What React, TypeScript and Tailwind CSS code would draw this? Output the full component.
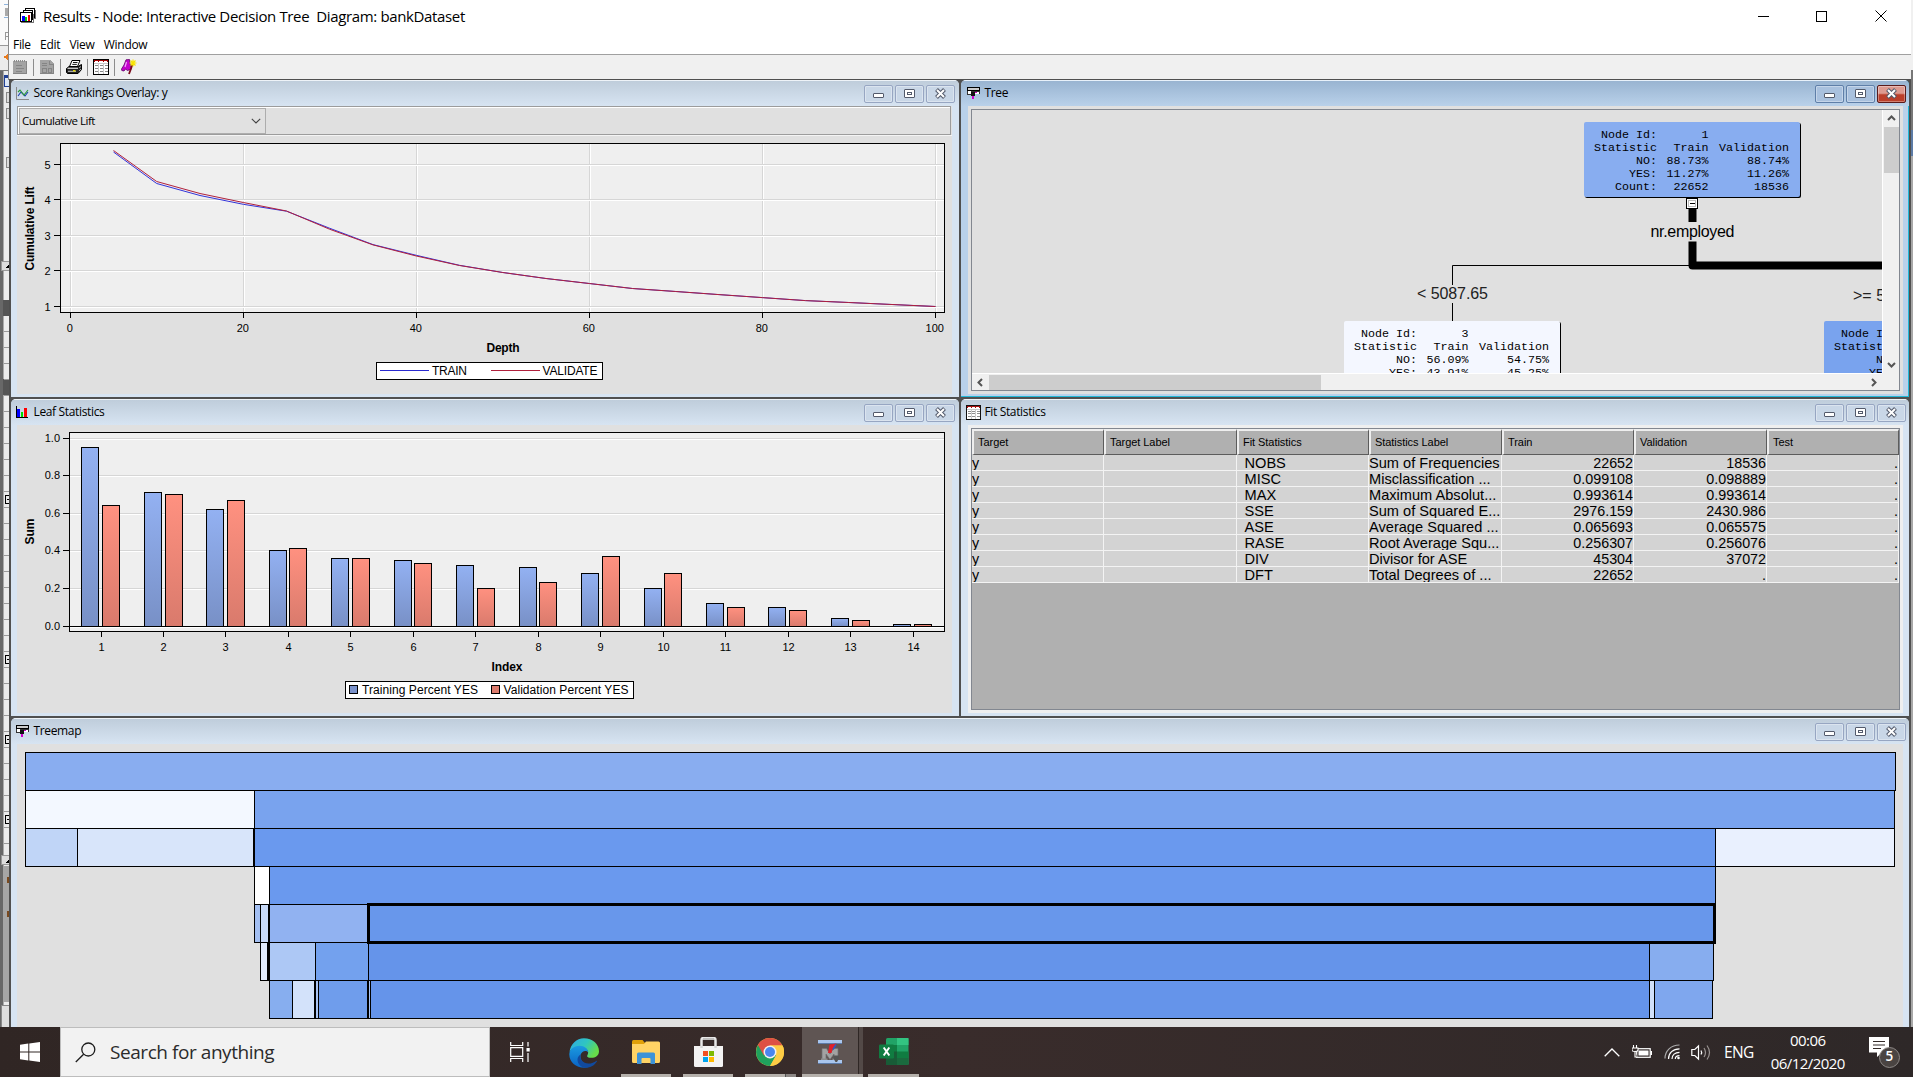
import React from 'react';

const UI = 'font-["Open_Sans","Noto_Sans",sans-serif]';
const ARIAL = 'font-["Liberation_Sans",Arial,sans-serif]';

/* ---------- small icons ---------- */

function AppIcon() {
  return (
    <svg width="16" height="16" viewBox="0 0 16 16" shapeRendering="crispEdges">
      <rect x="5.5" y=".5" width="9" height="9" fill="#fff" stroke="#000" />
      <path d="M7 2.500h6" stroke="#000" strokeDasharray="2 1" />
      <rect x="3.500" y="2.500" width="9" height="9" fill="#fff" stroke="#000" />
      <path d="M15.500 2v8.500h-3" fill="none" stroke="#777" />
      <rect x=".5" y="4.500" width="11" height="9" fill="#fff" stroke="#000" />
      <rect x="2" y="8" width="3" height="5" fill="#00f" />
      <rect x="5" y="9" width="2" height="4" fill="#0c0" />
      <rect x="8" y="7" width="2" height="6" fill="#e00" />
      <path d="M1 14.500h12.500V6" stroke="#777" fill="none" />
    </svg>
  );
}

function NotepadIcon() {
  return (
    <svg width="14" height="16" viewBox="0 0 14 16" shapeRendering="crispEdges">
      <rect x="0" y="2" width="14" height="13" fill="#a3a3a3" />
      <path d="M1 1.500h12" stroke="#8c8c8c" strokeDasharray="1 1" strokeWidth="2" />
      <path d="M3 6.500h6M3 9.500h8M3 12.500h6M0 14.500h14M13.500 2v13" stroke="#858585" />
    </svg>
  );
}

function ReportIcon() {
  return (
    <svg width="14" height="16" viewBox="0 0 14 16" shapeRendering="crispEdges">
      <path d="M0 1h10l4 4v10H0z" fill="#a3a3a3" />
      <path d="M2 4.500h5M2 6.500h5M9.500 2v3h3M2.500 9.500h4v4h-4zM8.500 9.500h3v4h-3z" stroke="#858585" fill="none" />
      <path d="M0 14.500h14M13.500 5v10" stroke="#858585" />
    </svg>
  );
}

function PrinterIcon() {
  return (
    <svg width="16" height="16" viewBox="0 0 16 16">
      <path d="M6 1.500h8l-2.500 6h-8z" fill="#fff" stroke="#000" />
      <path d="M7 3.500h4.500M6.300 5.400h4.500" stroke="#000" strokeWidth=".9" />
      <path d="M3 7.500h9l3.500-2v5l-3.500 4H1.500l-1-1v-4z" fill="#222" stroke="#000" />
      <path d="M1.500 9.300h10.500" stroke="#ddd" strokeWidth="1.200" />
      <path d="M2 12.300h8" stroke="#ccc" />
      <path d="M7 11.800h2.500" stroke="#e8d800" strokeWidth="1.400" />
      <path d="M13 9l2-1.500M13 12l2-2" stroke="#aaa" />
    </svg>
  );
}

function TableIcon({ size = 16 }: { size?: number }) {
  return (
    <svg width={size} height={size} viewBox="0 0 16 16" shapeRendering="crispEdges" className="shrink-0">
      <rect x=".5" y=".5" width="15" height="15" fill="#fff" stroke="#000" />
      <path d="M1 1.500h14" stroke="#a00000" />
      <path d="M1 2.500h1M5 2.500h1M10 2.500h1M14 2.500h1" stroke="#a00000" />
      <path d="M5.500 4v11M10.500 4v11M1 4.500h14" stroke="#c8c8c8" />
      <path d="M2 6.500h3M6.500 6.500h3M11.500 6.500h3M2 9.500h3M6.500 9.500h3M11.500 9.500h3M2 12.500h3M6.500 12.500h3M11.500 12.500h3" stroke="#888" />
    </svg>
  );
}

function WandIcon() {
  return (
    <svg width="16" height="16" viewBox="0 0 16 16">
      <path d="M5 .8l3.500-.3.500 4 1.500 5.500-4 1.500-2-1.500-1.500 2L.8 11.500.5 10 3 6z" fill="#c400cc" stroke="#600068" strokeWidth=".8" />
      <path d="M5.500 3L4 8" stroke="#f6a0ff" strokeWidth="1.200" />
      <path d="M11.500 5.500L8 15" stroke="#7a0a1a" strokeWidth="1.800" />
      <path d="M12 .5v7M8.500 4h7M9.500 1.500l5 5M14.500 1.500l-5 5" stroke="#f8e400" strokeWidth="1.200" />
    </svg>
  );
}

function LineChartIcon() {
  return (
    <svg width="14" height="14" viewBox="0 0 14 14">
      <path d="M.5 0v12.500H13" fill="none" stroke="#888" />
      <path d="M2 9l3-4 4 4 3-4" fill="none" stroke="#1c3fae" strokeWidth="1.100" />
      <path d="M2 5l2-2 4 5 4-5" fill="none" stroke="#2a9a3a" strokeWidth="1.100" />
    </svg>
  );
}

function BarChartIcon() {
  return (
    <svg width="14" height="13" viewBox="0 0 14 13" shapeRendering="crispEdges">
      <path d="M.5 0v11.500H12" fill="none" stroke="#000" />
      <rect x="1" y="3" width="3" height="8" fill="#00f" />
      <rect x="5" y="6" width="2" height="5" fill="#0d0" />
      <rect x="8" y="2" width="3" height="9" fill="#f00" />
    </svg>
  );
}

function TreeIcon() {
  return (
    <svg width="13" height="13" viewBox="0 0 13 13" shapeRendering="crispEdges">
      <rect x=".5" y=".5" width="12" height="3" fill="#ccc" stroke="#000" />
      <rect x="1" y="4" width="11" height="3" fill="#fff" />
      <path d="M.5 4v3.500H5M4 4.500h9M12.500 4v3" stroke="#333" fill="none" />
      <path d="M5 5.500h6" stroke="#d000d0" strokeDasharray="2 1" />
      <rect x="4" y="5" width="4" height="4" fill="#111" />
      <rect x="5" y="9" width="2" height="3" fill="#d000d0" />
    </svg>
  );
}

/* ---------- inner window chrome ---------- */

function FrameButtons({ active }: { active?: boolean }) {
  const edge = active ? 'border-[#5f7fa8] bg-[#a9c1de]' : 'border-[#97a6c2] bg-[#c9d7e7]';
  return (
    <div className="flex gap-[2px]">
      <div className={`flex h-[18px] w-[29px] items-center justify-center rounded-[2px] border ${edge} pt-[3px] inset-shadow-[0_0_0_1px_#ffffff55]`}>
        <div className="h-[5px] w-[11px] rounded-[1px] border border-[#535a6b] bg-white" />
      </div>
      <div className={`flex h-[18px] w-[29px] items-center justify-center rounded-[2px] border ${edge} inset-shadow-[0_0_0_1px_#ffffff55]`}>
        <div className="flex h-[9px] w-[11px] items-center justify-center rounded-[1px] border border-[#535a6b] bg-white">
          <div className="h-[3px] w-[5px] border border-[#535a6b]" />
        </div>
      </div>
      <div
        className={`flex h-[18px] w-[29px] items-center justify-center rounded-[2px] border ${
          active ? 'border-[#5a1a1a] bg-linear-to-b from-[#dd9a90] from-45% to-[#bb3f2b] to-55%' : edge
        } inset-shadow-[0_0_0_1px_#ffffff55]`}
      >
        <svg width="13" height="11" viewBox="0 0 13 11">
          <path d="M2.500 1.500l8 8M10.500 1.500l-8 8" stroke="#535a6b" strokeWidth="4" />
          <path d="M3 2l7 7M10 2l-7 7" stroke="#fff" strokeWidth="2" />
        </svg>
      </div>
    </div>
  );
}

type PanelProps = {
  icon: React.ReactNode;
  title: string;
  active?: boolean;
  edge: string;
  children: React.ReactNode;
};

function Panel({ icon, title, active, edge, children }: PanelProps) {
  return (
    <section
      className={`flex min-h-0 min-w-0 flex-col overflow-hidden rounded-t-[5px] ${edge} ${
        active ? 'bg-[#b9d1ea] inset-shadow-[-1px_-1px_0_0_#22b8d8]' : 'bg-[#d7e4f2]'
      }`}
    >
      <header
        className={`-mx-[7px] flex h-[26px] shrink-0 items-center border-t pr-[4px] pl-[6px] ${
          active
            ? 'border-[#e8f1fa] bg-linear-to-b from-[#99b4d1] to-[#b9d1ea]'
            : 'border-[#eef3f8] bg-linear-to-b from-[#bfcddb] to-[#d7e4f2]'
        }`}
      >
        <span className="flex w-[17.5px] shrink-0">{icon}</span>
        <h2 className={`grow pb-px text-[12px] leading-[24px] tracking-[-0.35px] text-black ${UI}`}>{title}</h2>
        <FrameButtons active={active} />
      </header>
      <div className="flex min-h-0 grow flex-col bg-[#e0e0e0]">{children}</div>
    </section>
  );
}

/* ---------- Score rankings ---------- */

const liftX = [113.5, 156.7, 200, 243.3, 286.5, 329.8, 373, 416.3, 459.5, 502.8, 546, 589.3, 632.5, 675.8, 719, 762.3, 805.5, 848.8, 892, 935.5];
const trainY = [152, 183.5, 195.5, 204.3, 211.2, 228.3, 244.6, 255.3, 265.3, 272.5, 278.5, 283.5, 288.5, 291.5, 294.6, 297.6, 300.6, 302.5, 304.5, 306.5];
const validY = [150.5, 181.5, 193.5, 202.5, 211, 229.3, 244.9, 256, 265.5, 272.5, 278.5, 283.5, 288.5, 291.5, 294.6, 297.6, 300.6, 302.5, 304.5, 306.5];
const toPoints = (ys: number[]) => ys.map((y, i) => `${liftX[i]},${y}`).join(' ');

function LiftChart() {
  const xs = [70.5, 243.5, 416.5, 589.5, 762.5, 935.5];
  const ys = [306.5, 270.5, 235.5, 199.5, 164.5];
  return (
    <svg className={`block ${ARIAL}`} width="935" height="258" viewBox="17 136 935 258">
      <rect x="60.5" y="143.5" width="884" height="169" fill="#efefef" />
      {xs.map((x) => (
        <g key={x}>
          <path d={`M${x} 144V312`} stroke="#d6d6d6" />
          <path d={`M${x + 1} 144V312`} stroke="#fff" />
        </g>
      ))}
      {ys.map((y) => (
        <g key={y}>
          <path d={`M61 ${y}H944`} stroke="#d6d6d6" />
          <path d={`M61 ${y + 1}H944`} stroke="#fff" />
        </g>
      ))}
      <polyline points={toPoints(trainY)} fill="none" stroke="#3232d8" />
      <polyline points={toPoints(validY)} fill="none" stroke="#b0203c" />
      <rect x="60.5" y="143.5" width="884" height="169" fill="none" stroke="#000" />
      {xs.map((x, i) => (
        <g key={x}>
          <path d={`M${x} 313v5`} stroke="#000" />
          <text x={x - 0.7} y="332" fontSize="11" textAnchor="middle">{i * 20}</text>
        </g>
      ))}
      {ys.map((y, i) => (
        <g key={y}>
          <path d={`M54 ${y}h6`} stroke="#000" />
          <text x="50.500" y={y + 4} fontSize="11" textAnchor="end">{i + 1}</text>
        </g>
      ))}
      <text transform="translate(34 228.500) rotate(-90)" fontSize="12" fontWeight="bold" textAnchor="middle" textLength="84">Cumulative Lift</text>
      <text x="503" y="352" fontSize="12" fontWeight="bold" textAnchor="middle" textLength="33">Depth</text>
      <rect x="376.500" y="362.500" width="226" height="17" fill="#fff" stroke="#000" />
      <path d="M380 370.500h49" stroke="#2a2ad0" />
      <text x="432" y="375" fontSize="12" textLength="35">TRAIN</text>
      <path d="M491 370.500h49" stroke="#b0203c" />
      <text x="542.500" y="375" fontSize="12" textLength="55">VALIDATE</text>
    </svg>
  );
}

function ScoreRankings() {
  return (
    <>
      <div className="mr-px flex h-[29px] border border-[#9c9c9c] bg-[#e0e0e0] inset-shadow-[1px_1px_0_0_#fff]">
        <div className={`mt-px ml-px flex h-[26px] w-[247px] items-center justify-between border border-[#adadad] bg-[#e1e1e1] pr-[4px] pl-[2px] ${UI}`}>
          <span className="text-[11.5px] tracking-[-0.5px]">Cumulative Lift</span>
          <svg width="10" height="6" viewBox="0 0 10 6">
            <path d="M.8.8L5 5 9.200.8" fill="none" stroke="#444" strokeWidth="1.100" />
          </svg>
        </div>
      </div>
      <div className="h-px bg-[#f4f4f4]" />
      <LiftChart />
    </>
  );
}

/* ---------- Leaf statistics ---------- */

const trainBars: [number, number][] = [
  [81, 447], [144, 492], [206, 509], [269, 550], [331, 558], [394, 560], [456, 565],
  [519, 567], [581, 573], [644, 588], [706, 603], [768, 607], [831, 618], [893, 624],
];
const validBars: [number, number][] = [
  [102, 505], [165, 494], [227, 500], [289, 548], [352, 558], [414, 563], [477, 588],
  [539, 582], [602, 556], [664, 573], [727, 607], [789, 610], [852, 620], [914, 624],
];
const leafTicks = [101, 163, 225, 288, 350, 413, 475, 538, 600, 663, 725, 788, 850, 913];

function LeafChart() {
  const ys: [number, string][] = [[438.5, '1.0'], [475.5, '0.8'], [513.5, '0.6'], [550.5, '0.4'], [588.5, '0.2'], [626.5, '0.0']];
  return (
    <svg className={`block ${ARIAL}`} width="935" height="288" viewBox="17 425 935 288">
      <defs>
        <linearGradient id="blueBar" x1="0" y1="0" x2="0" y2="1">
          <stop offset="0" stopColor="#93b1f2" />
          <stop offset="1" stopColor="#7890c6" />
        </linearGradient>
        <linearGradient id="redBar" x1="0" y1="0" x2="0" y2="1">
          <stop offset="0" stopColor="#ff9180" />
          <stop offset="1" stopColor="#d97a6c" />
        </linearGradient>
      </defs>
      <rect x="69.5" y="432.5" width="875" height="199" fill="#efefef" />
      {ys.map(([y, label]) => (
        <g key={label}>
          <path d={`M70 ${y}H944`} stroke="#d6d6d6" />
          <path d={`M70 ${y + 1}H944`} stroke="#fff" />
          <path d={`M63 ${y}h6`} stroke="#000" />
          <text x="60" y={y + 3.5} fontSize="11" textAnchor="end">{label}</text>
        </g>
      ))}
      {trainBars.map(([x, y]) => (
        <rect key={x} x={x + 0.5} y={y + 0.5} width="17" height={626 - y} fill="url(#blueBar)" stroke="#000" />
      ))}
      {validBars.map(([x, y]) => (
        <rect key={x} x={x + 0.5} y={y + 0.5} width="17" height={626 - y} fill="url(#redBar)" stroke="#000" />
      ))}
      <path d="M69 626.5H944" stroke="#000" />
      <rect x="69.5" y="432.5" width="875" height="199" fill="none" stroke="#000" />
      {leafTicks.map((x, i) => (
        <g key={x}>
          <path d={`M${x + 0.5} 632v5`} stroke="#000" />
          <text x={x + 0.5} y="651" fontSize="11" textAnchor="middle">{i + 1}</text>
        </g>
      ))}
      <text transform="translate(34 531.500) rotate(-90)" fontSize="12" fontWeight="bold" textAnchor="middle" textLength="26">Sum</text>
      <text x="507" y="671" fontSize="12" fontWeight="bold" textAnchor="middle" textLength="31">Index</text>
      <rect x="345.500" y="681.500" width="288" height="17" fill="#fff" stroke="#000" />
      <rect x="349.500" y="685.500" width="8" height="8" fill="#7a92cb" stroke="#000" />
      <text x="362" y="694" fontSize="12" textLength="116">Training Percent YES</text>
      <rect x="491.500" y="685.500" width="8" height="8" fill="#dc7b6d" stroke="#000" />
      <text x="503.500" y="694" fontSize="12" textLength="125">Validation Percent YES</text>
    </svg>
  );
}

/* ---------- Tree diagram ---------- */

type NodeRow = [string, string, string];

function TreeNode({ x, y, fill, rows }: { x: number; y: number; fill: string; rows: NodeRow[] }) {
  return (
    <g className='font-["Liberation_Mono",monospace]' fontSize="11.67">
      <rect x={x + 1} y={y + 1} width="216" height="75" rx="2" fill="#000" />
      <rect x={x} y={y} width="216" height="75" rx="2" fill={fill} />
      {rows.map(([a, b, c], i) => (
        <g key={i} textAnchor="end">
          <text x={x + 73} y={y + 16.4 + i * 13}>{a}</text>
          <text x={x + 124.5} y={y + 16.4 + i * 13}>{b}</text>
          <text x={x + 205} y={y + 16.4 + i * 13}>{c}</text>
        </g>
      ))}
    </g>
  );
}

function TreeDiagram() {
  return (
    <svg className={`block bg-[#e0e0e0] ${ARIAL}`} width="910" height="263" viewBox="972 110 910 263">
      <path d="M1692 265.500H1452.500V285M1452.500 303v18" fill="none" stroke="#000" />
      <path d="M1692.500 209v13M1692.500 241.500v24H1884" fill="none" stroke="#000" strokeWidth="8" strokeLinejoin="round" />
      <rect x="1686.500" y="198.500" width="11" height="10" fill="#fff" stroke="#000" />
      <rect x="1688.500" y="200.500" width="7" height="6" fill="#fff" stroke="#bbb" />
      <path d="M1690 203.500h5" stroke="#000" />
      <text x="1650.500" y="236.500" fontSize="16" textLength="84">nr.employed</text>
      <text x="1417" y="299" fontSize="16" textLength="71" fill="#222">{'< 5087.65'}</text>
      <text x="1853" y="301" fontSize="16" fill="#222">{'>= 5'}</text>
      <TreeNode
        x={1584}
        y={122}
        fill="#88adf0"
        rows={[['Node Id:', '1', ''], ['Statistic', 'Train', 'Validation'], ['NO:', '88.73%', '88.74%'], ['YES:', '11.27%', '11.26%'], ['Count:', '22652', '18536']]}
      />
      <TreeNode
        x={1344}
        y={321}
        fill="#f4f7ff"
        rows={[['Node Id:', '3', ''], ['Statistic', 'Train', 'Validation'], ['NO:', '56.09%', '54.75%'], ['YES:', '43.91%', '45.25%']]}
      />
      <TreeNode x={1824} y={321} fill="#79a3ee" rows={[['Node Id:', '', ''], ['Statistic', '', ''], ['NO:', '', ''], ['YES:', '', '']]} />
    </svg>
  );
}

function Chevron({ d }: { d: string }) {
  return (
    <svg width="9" height="9" viewBox="0 0 9 9" className="shrink-0">
      <path d={d} fill="none" stroke="#555" strokeWidth="2" />
    </svg>
  );
}

function TreeView() {
  return (
    <div className="m-[3px] flex h-[282px] w-[929px] border border-[#828790] bg-[#f0f0f0]">
      <div className="flex flex-col">
        <TreeDiagram />
        <div className="flex h-[17px] items-center border-t border-white bg-[#f0f0f0]">
          <div className="flex w-[17px] justify-center"><Chevron d="M6 1L2.500 4.500 6 8" /></div>
          <div className="h-[15px] w-[332px] bg-[#cdcdcd]" />
          <div className="grow" />
          <div className="flex w-[17px] justify-center"><Chevron d="M3 1l3.500 3.500L3 8" /></div>
        </div>
      </div>
      <div className="flex h-[263px] w-[17px] flex-col items-center border-l border-white">
        <div className="flex h-[17px] items-center"><Chevron d="M1 6l3.500-3.500L8 6" /></div>
        <div className="h-[46px] w-[15px] bg-[#cdcdcd]" />
        <div className="grow" />
        <div className="flex h-[17px] items-center"><Chevron d="M1 3l3.500 3.500L8 3" /></div>
      </div>
    </div>
  );
}

/* ---------- Fit statistics ---------- */

const headers = ['Target', 'Target Label', 'Fit Statistics', 'Statistics Label', 'Train', 'Validation', 'Test'];
const fitRows: [string, string, string, string][] = [
  ['NOBS', 'Sum of Frequencies', '22652', '18536'],
  ['MISC', 'Misclassification ...', '0.099108', '0.098889'],
  ['MAX', 'Maximum Absolut...', '0.993614', '0.993614'],
  ['SSE', 'Sum of Squared E...', '2976.159', '2430.986'],
  ['ASE', 'Average Squared ...', '0.065693', '0.065575'],
  ['RASE', 'Root Average Squ...', '0.256307', '0.256076'],
  ['DIV', 'Divisor for ASE', '45304', '37072'],
  ['DFT', 'Total Degrees of ...', '22652', '.'],
];
const fitCols = 'grid grid-cols-[132px_133px_132px_133px_132px_133px_132px]';
const cell = 'h-[16px] overflow-hidden border-r border-b border-[#f3f3f3] bg-[#d3d3d3] whitespace-nowrap';

function FitTable() {
  return (
    <div className="flex grow flex-col bg-[#efefef] p-[3px]">
      <div className={`flex h-[282px] w-[929px] flex-col border border-[#828790] bg-[#b0b0b0] text-black ${ARIAL}`}>
        <div className={fitCols}>
          {headers.map((h) => (
            <div key={h} className="flex h-[26px] items-center border-t-2 border-r border-b border-l-2 border-t-[#eee] border-r-[#5c5c5c] border-b-[#5c5c5c] border-l-[#eee] bg-[#b0b0b0] pl-[4px] text-[11px] tracking-[-0.05px]">
              {h}
            </div>
          ))}
        </div>
        {fitRows.map(([stat, label, train, valid]) => (
          <div key={stat} className={`${fitCols} text-[14.3px] leading-[16px]`}>
            <div className={cell}>y</div>
            <div className={cell} />
            <div className={`${cell} pl-[7.5px] text-[14.6px]`}>{stat}</div>
            <div className={`${cell} text-[14.6px]`}>{label}</div>
            <div className={`${cell} text-right`}>{train}</div>
            <div className={`${cell} text-right`}>{valid}</div>
            <div className={`${cell} text-right`}>.</div>
          </div>
        ))}
      </div>
    </div>
  );
}

/* ---------- Treemap ---------- */

const treemap: [number, number, string][][] = [
  [[25, 1895, '#89adf0']],
  [[25, 254, '#f3f8ff'], [254, 1894, '#79a3ee']],
  [[25, 77, '#c0d5f7'], [77, 253, '#d8e5fa'], [254, 1715, '#6a99ee'], [1715, 1894, '#e9f0fe']],
  [[254, 269, '#ffffff'], [269, 1715, '#6a99ee']],
  [[254, 260, '#a3bff2'], [260, 268, '#c8daf8'], [269, 368, '#91b2f1'], [368, 1714, '#6897eb']],
  [[260, 267, '#e0eafc'], [268, 269, '#000000'], [269, 315, '#adc8f5'], [315, 368, '#73a1ee'], [368, 1649, '#6594ea'], [1649, 1713, '#87adef']],
  [[269, 292, '#87aeef'], [292, 314, '#d3e2fa'], [315, 318, '#a9c4f3'], [318, 367, '#6f9dec'], [368, 370, '#a9c4f3'], [370, 1649, '#6594ea'], [1649, 1654, '#d0e0fa'], [1654, 1712, '#7fa7ee']],
];
const bandTop = [752, 790, 828, 866, 904, 942, 980, 1018];

function Treemap() {
  return (
    <svg className="block" width="1885" height="283" viewBox="17 744 1885 283">
      {treemap.map((band, r) =>
        band.map(([x0, x1, fill]) => (
          <rect key={`${r}-${x0}`} x={x0 + 0.5} y={bandTop[r] + 0.5} width={x1 - x0} height={bandTop[r + 1] - bandTop[r]} fill={fill} stroke="#000" />
        )),
      )}
      <rect x="368.500" y="904.500" width="1346" height="38" fill="none" stroke="#000" strokeWidth="3" />
    </svg>
  );
}

/* ---------- window behind, visible at both edges ---------- */

function LeftSliver() {
  return (
    <svg className="block shrink-0" width="9" height="1027" viewBox="0 0 9 1027" shapeRendering="crispEdges">
      <rect width="9" height="1027" fill="#ececec" />
      <rect width="9" height="45" fill="#fafafa" />
      <path d="M4 4.500h5M4 17.500h5" stroke="#8fb4dc" />
      <rect x="5" y="8" width="3" height="8" fill="#aaa" />
      <path d="M5.500 40v-8h3M5.500 36h3" stroke="#999" fill="none" />
      <path d="M0 45.500h9" stroke="#999" />
      <path d="M9 52l-2 3-4 2 4 2 2 4z" fill="#e87a1c" />
      <path d="M0 70.500h9" stroke="#777" />
      <rect y="71" width="3" height="956" fill="#686868" />
      <rect x="3" y="71" width="1" height="956" fill="#aaa" />
      <rect x="4" y="75" width="5" height="12" fill="#1f3f94" />
      <rect x="5" y="78" width="4" height="8" fill="#dce6f5" />
      {[92, 108, 157].map((y) => (
        <rect key={y} x="6.500" y={y + 0.5} width="5" height="10" fill="#ddd" stroke="#888" />
      ))}
      {[261, 855].map((y) => (
        <path key={y} d={`M1 ${y}h8v9h-8z`} fill="#ddd" stroke="#999" />
      ))}
      <path d="M5 268l4-4v4zM6 863l3-4v4z" fill="#000" />
      {[300, 379].map((y) => (
        <rect key={y} x="3" y={y} width="6" height="16" fill="#555" />
      ))}
      {Array.from({ length: 33 }, (_, i) => 331 + i * 16).map((y) => (
        <path key={y} d={`M4 ${y + 0.5}h5`} stroke="#9a9a9a" />
      ))}
      {[495, 655, 735, 815].map((y) => (
        <path key={y} d={`M9 ${y + 0.5}H5.500v8H9M7 ${y + 4.5}h2`} stroke="#000" fill="none" />
      ))}
      <rect x="3" y="866" width="6" height="136" fill="#a6a6a6" />
      <rect x="7" y="877" width="2" height="6" fill="#7a4a20" />
      <rect x="7" y="911" width="2" height="6" fill="#7a4a20" />
      <rect x="1" y="1005" width="8" height="22" fill="#dedede" stroke="#888" />
      <rect x="8" width="1" height="80" fill="#8a8a8a" />
    </svg>
  );
}

/* ---------- taskbar ---------- */

function TaskViewIcon() {
  return (
    <svg width="20" height="20" viewBox="0 0 20 20">
      <path d="M.7 0v3.500h12V0M.7 5.700h12v8.600h-12zM.7 20v-3.500h12V20M18 0v4.500M18 11v9" fill="none" stroke="#fff" strokeWidth="1.200" />
      <rect x="16.500" y="6" width="3.200" height="3.500" fill="#fff" />
    </svg>
  );
}

function EdgeIcon() {
  return (
    <svg width="30" height="30" viewBox="0 0 30 30">
      <defs>
        <linearGradient id="edgeTop" x1="0" y1="0" x2="1" y2=".5">
          <stop offset="0" stopColor="#2fa8e8" />
          <stop offset=".55" stopColor="#2fc6c0" />
          <stop offset="1" stopColor="#67dd4a" />
        </linearGradient>
        <linearGradient id="edgeLow" x1="0" y1="0" x2="0" y2="1">
          <stop offset="0" stopColor="#1b9be0" />
          <stop offset="1" stopColor="#0a62c4" />
        </linearGradient>
      </defs>
      <path d="M.5 14C1.500 6 7.500.2 15 .2 23.500.2 30 6 30 13.200c0 4.600-3.800 6.600-7.500 6.600-3.500 0-5-1.300-4.200-2.400 2.400-3.600-.3-8-5.300-8C7 9.400 2 11 .5 14z" fill="url(#edgeTop)" />
      <path d="M.3 16.500C.3 11.500 5 7.800 10.500 7.800c5.200 0 8.500 3 8.800 6.500-1.500-1.600-4-1.800-5.800-.4-3.500 2.800-2.300 8.600 1.700 11.700 1.800 1.400 3.300 2.100 4.200 3.600C9.500 31.500.3 25.500.3 16.500z" fill="url(#edgeLow)" />
      <path d="M11.500 16.500c-1.200 4.500 2.500 9 8 9 3 0 5.800-1.300 7.700-2.600.6-.3 1 .2.700.7-2.300 3.800-6.300 6.200-11 6.200C12 29.500 8.500 26 8.500 21.500c0-2 1.200-4 3-5z" fill="#114a9e" />
    </svg>
  );
}

function FolderIcon() {
  return (
    <svg width="28" height="24" viewBox="0 0 28 24">
      <path d="M0 1.500Q0 0 1.500 0h9L13 3v4H0z" fill="#e0a009" />
      <path d="M0 4h12l2-2.500h12.500Q28 1.500 28 3v18.500q0 1.500-1.500 1.500h-25Q0 23 0 21.500z" fill="#ffd365" />
      <path d="M5 24V14q0-1.500 1.500-1.500h15Q23 12.500 23 14v10h-4.500v-5q0-1-1-1h-7q-1 0-1 1v5z" fill="#3d93d8" />
    </svg>
  );
}

function StoreIcon() {
  return (
    <svg width="29" height="30" viewBox="0 0 29 30">
      <path d="M7.500 11V3q0-2 2-2h10q2 0 2 2v8" fill="none" stroke="#e8e8e8" strokeWidth="2.500" />
      <path d="M9 1h11v2H9z" fill="#bdbdbd" />
      <path d="M0 9h29v19.500q0 1.500-1.500 1.500h-26Q0 30 0 28.500z" fill="#f3f3f3" />
      <path d="M6.300 9h2.500v2H6.300zM20.300 9h2.500v2h-2.500z" fill="#d5d5d5" />
      <rect x="9" y="14" width="5" height="5" fill="#f25022" />
      <rect x="15" y="14" width="5" height="5" fill="#7fba00" />
      <rect x="9" y="20" width="5" height="5" fill="#00a4ef" />
      <rect x="15" y="20" width="5" height="5" fill="#ffb900" />
    </svg>
  );
}

function ChromeIcon() {
  return (
    <svg width="28" height="28" viewBox="0 0 28 28">
      <circle cx="14" cy="14" r="14" fill="#fbc83d" />
      <path d="M1.900 7A14 14 0 0 0 14 28l6-10.600-6-3.400z" fill="#1fa15d" />
      <path d="M1.900 7l6 10.500L14 14l.5-6.500H26.400A14 14 0 0 0 1.900 7z" fill="#dd5044" />
      <path d="M14 7.500h12.500a14 14 0 0 1-12.400 20.500l6-10.600z" fill="#fdcc45" />
      <circle cx="14" cy="14" r="6.500" fill="#f1f1f1" />
      <circle cx="14" cy="14" r="5" fill="#4a86ee" />
    </svg>
  );
}

function MinerIcon() {
  return (
    <svg width="24" height="24" viewBox="0 0 24 24">
      <rect y="0" width="24" height="3" fill="#a9c6ee" />
      <rect y="20" width="24" height="3" fill="#a9c6ee" />
      <rect y="3" width="24" height="1" fill="#5d7ba8" />
      <rect y="23" width="24" height="1" fill="#5d7ba8" />
      <path d="M4 19.500V8.500h4.500l3.500 5.500 3.500-5.500H20v11h-4V14l-4 5.500L8 14v5.500z" fill="#a2a2a2" stroke="#707070" strokeWidth=".7" />
      <path d="M3 19.200h6.500M14.500 19.200H19" stroke="#8e8e8e" strokeWidth="1.600" />
      <path d="M10 13l1.500-8.500L18.500 3.500l-2 4-2 1.500-1 4z" fill="#e0202a" />
      <path d="M15 9.500L18 4.500" stroke="#3456c0" strokeWidth="1.500" />
      <path d="M15.500 15.500h5.500v3l-2 3.500h-1.500l-2-3.500z" fill="#555" />
    </svg>
  );
}

function ExcelIcon() {
  return (
    <svg width="30" height="27" viewBox="0 0 30 27">
      <rect x="7" y="0" width="22.500" height="27" rx="1.500" fill="#21a366" />
      <rect x="18" y="0" width="11.500" height="7" fill="#33c481" />
      <rect x="7" y="7" width="11" height="7" fill="#107c41" />
      <rect x="18" y="13.500" width="11.500" height="7" fill="#107c41" />
      <rect x="7" y="13.500" width="11" height="13.500" fill="#185c37" />
      <rect x="18" y="20" width="11.500" height="7" fill="#1a6a3e" />
      <rect x="0" y="6.500" width="15" height="14" rx="1.300" fill="#107c41" />
      <path d="M4.700 9.500l5.600 8M10.300 9.500l-5.600 8" stroke="#fff" strokeWidth="2" />
    </svg>
  );
}

function TaskButton({ children, active, stacked, w }: { children: React.ReactNode; active?: boolean; stacked?: boolean; w: string }) {
  return (
    <div className={`flex h-full flex-col ${w}`}>
      <div className="flex grow">
        <div className={`flex grow items-center justify-center pt-[2px] ${active ? 'bg-[#5f5553]' : ''} ${stacked ? 'pr-[2px]' : ''}`}>{children}</div>
        {active && <div className="w-[5px] border-l border-[#2f2725] bg-[#534947]" />}
      </div>
      <div className="flex h-[3px]">
        <div className="grow bg-[#b5b0ab]" />
        {stacked && <div className="w-[11px] border-l border-[#555] bg-[#8d8886]" />}
      </div>
    </div>
  );
}

function Taskbar() {
  return (
    <footer className={`flex h-[50px] shrink-0 bg-linear-to-r from-[#302624] via-[#392c2b] to-[#2e2828] text-white ${UI}`}>
      <div className="flex w-[60px] items-center justify-center">
        <svg width="20" height="20" viewBox="0 0 20 20" fill="#fff">
          <path d="M0 2.800l8.300-1.200V9.500H0zM9.300 1.400L20 0v9.500H9.300zM0 10.500h8.300v8L0 17.300zM9.300 10.500H20V20L9.300 18.600z" />
        </svg>
      </div>
      <div className="flex w-[430px] items-center border border-[#bdbdbd] bg-[#f2f2f2] pl-[14px] text-[#2b2b2b]">
        <svg width="21" height="21" viewBox="0 0 21 21">
          <circle cx="13.300" cy="7.500" r="6.500" fill="none" stroke="#1c1c1c" strokeWidth="1.300" />
          <path d="M8.600 12.200L.8 20" stroke="#1c1c1c" strokeWidth="1.300" />
        </svg>
        <span className="ml-[14px] text-[19px] leading-[24px] tracking-[-0.44px]">Search for anything</span>
      </div>
      <div className="flex w-[60px] items-center justify-center"><TaskViewIcon /></div>
      <div className="flex w-[68px] items-center justify-center pt-px"><EdgeIcon /></div>
      <div className="flex grow gap-[11px] pl-[3px]">
        <TaskButton w="w-[51px] pr-px"><FolderIcon /></TaskButton>
        <TaskButton w="w-[51px] pr-px"><StoreIcon /></TaskButton>
        <TaskButton w="w-[51px]" stacked><ChromeIcon /></TaskButton>
        <TaskButton w="w-[61px] -ml-[5px]" active><MinerIcon /></TaskButton>
        <TaskButton w="w-[51px] -ml-[6px]"><ExcelIcon /></TaskButton>
      </div>
      <div className="flex w-[309px] items-center">
        <svg width="16" height="9" viewBox="0 0 16 9"><path d="M.7 8.300L8 1l7.300 7.300" fill="none" stroke="#fff" strokeWidth="1.300" /></svg>
        <svg className="ml-[12px]" width="20" height="14" viewBox="0 0 20 14">
          <rect x="4.700" y="3.700" width="13.500" height="8.600" fill="none" stroke="#fff" strokeWidth="1.200" />
          <rect x="6.500" y="5.500" width="10" height="5" fill="#fff" />
          <rect x="18.500" y="6" width="1.500" height="4" fill="#fff" />
          <path d="M1.500 0v2.500M4.500 0v2.500M0 3h6v2Q6 6.500 3 6.500T0 5zM3 6v6h2" fill="#322927" stroke="#fff" strokeWidth="1.100" />
        </svg>
        <svg className="ml-[12px]" width="17" height="16" viewBox="0 0 17 16" fill="none" stroke="#fff" strokeWidth="1.200">
          <path d="M1 14.500C1 7 7 1 15.500 1" stroke="#aaa" />
          <path d="M4.500 15C4.500 9 9 4.800 15.500 4.800M8 15c0-4 3-6.700 7.500-6.700M11.300 15c0-2 1.500-3.300 4.200-3.300" />
          <circle cx="14.500" cy="14" r="1.300" fill="#fff" stroke="none" />
        </svg>
        <svg className="ml-[10px]" width="21" height="17" viewBox="0 0 21 17" fill="none" stroke="#fff" strokeWidth="1.200">
          <path d="M.8 5.500h3L7.500 2v13l-3.700-3.500h-3zM10 6.500q1.300 2 0 4" />
          <path d="M13 4q3 4.500 0 9M16 1.500q5 7 0 14" stroke="#9a9492" />
        </svg>
        <span className="ml-[12px] pt-px text-[15.5px] tracking-[-0.6px]">ENG</span>
        <div className="ml-[14px] flex w-[80px] flex-col items-center text-[15px] leading-[23px] tracking-[-0.55px]">
          <span>00:06</span>
          <span>06/12/2020</span>
        </div>
        <div className="relative mt-px ml-[21px] h-[32px] w-[32px]">
          <svg width="21" height="20" viewBox="0 0 21 20" className="block">
            <path d="M0 0h20v15.500h-7L8 20v-4.500H0z" fill="#fff" />
            <path d="M4 4.500h12M4 8h12M4 11.500h8" stroke="#332a28" strokeWidth="1.200" />
          </svg>
          <span className="absolute top-[10px] left-[10px] flex h-[21px] w-[21px] items-center justify-center rounded-full border border-[#8d8886] bg-[#4a4442] text-[13.5px] leading-none font-semibold">5</span>
        </div>
      </div>
    </footer>
  );
}

/* ---------- page ---------- */

function ToolbarSeparator() {
  return <div className="h-[17px] w-px bg-[#8c8c8c]" />;
}

export default function App() {
  return (
    <div className="flex h-[1077px] w-[1913px] flex-col overflow-hidden bg-[#e0e0e0]">
      <div className="flex h-[1027px] shrink-0">
        <LeftSliver />
        <main className="flex w-[1902px] shrink-0 flex-col bg-white">
          <div className={`flex h-[34px] shrink-0 items-center pb-[2px] pl-[11px] text-black ${UI}`}>
            <AppIcon />
            <h1 className="ml-[7px] grow text-[15px] tracking-[-0.36px] whitespace-pre">Results - Node: Interactive Decision Tree  Diagram: bankDataset</h1>
            <svg width="134" height="14" viewBox="0 0 134 14" className="mr-[23px]" fill="none" stroke="#000">
              <path d="M4 7.500h11" />
              <rect x="62.500" y="2.500" width="10" height="10" />
              <path d="M121.500 1.500l11 11M132.500 1.500l-11 11" />
            </svg>
          </div>
          <nav className={`flex h-[20px] shrink-0 items-center gap-[9.300px] pt-[2px] pl-[4px] text-[12px] tracking-[-0.300px] text-black ${UI}`}>
            <span>File</span>
            <span>Edit</span>
            <span>View</span>
            <span>Window</span>
          </nav>
          <div className="flex h-[25px] shrink-0 items-center gap-[5px] border-t border-[#a0a0a0] bg-[#f0f0f0] pl-[4px]">
            <span className="mr-px"><NotepadIcon /></span>
            <ToolbarSeparator />
            <span className="mx-px"><ReportIcon /></span>
            <ToolbarSeparator />
            <PrinterIcon />
            <ToolbarSeparator />
            <TableIcon />
            <ToolbarSeparator />
            <span className="ml-px"><WandIcon /></span>
          </div>
          <div className="grid h-[948px] grid-cols-[948px_948px] grid-rows-[317px_317px_309px] gap-[2px] border-t border-r-2 border-l-2 border-[#505050] bg-[#505050]">
            <Panel icon={<LineChartIcon />} title="Score Rankings Overlay: y" edge="pr-[7px] pb-[3px] pl-[6px]">
              <ScoreRankings />
            </Panel>
            <Panel icon={<TreeIcon />} title="Tree" active edge="pr-[6px] pb-[3px] pl-[7px]">
              <TreeView />
            </Panel>
            <Panel icon={<BarChartIcon />} title="Leaf Statistics" edge="pr-[7px] pb-[3px] pl-[6px]">
              <LeafChart />
            </Panel>
            <Panel icon={<span className="-ml-px"><TableIcon size={15} /></span>} title="Fit Statistics" edge="pr-[6px] pb-[3px] pl-[7px]">
              <FitTable />
            </Panel>
            <div className="col-span-2 grid">
              <Panel icon={<TreeIcon />} title="Treemap" edge="pr-[6px] pl-[6px]">
                <Treemap />
              </Panel>
            </div>
          </div>
        </main>
        <div className="flex w-[2px] flex-col bg-[#a8a8a8]">
          <div className="h-[70px] bg-[#f0f0f0]" />
          <div className="h-[60px] bg-[#777]" />
          <div className="h-[26px] bg-[#5c7ba5]" />
        </div>
      </div>
      <Taskbar />
    </div>
  );
}
